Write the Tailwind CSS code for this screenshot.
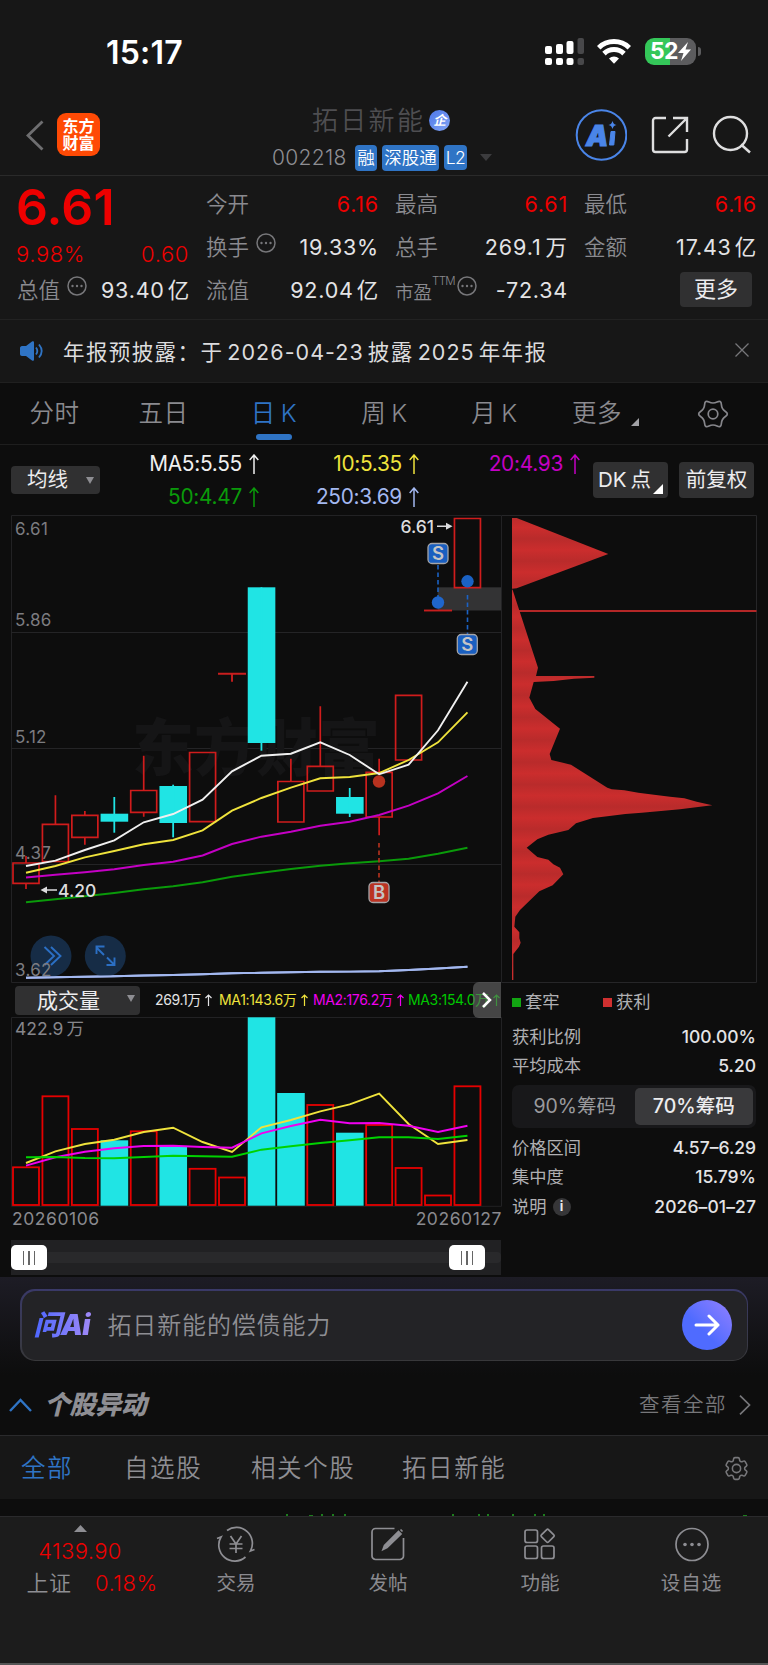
<!DOCTYPE html>
<html lang="zh-CN">
<head>
    <meta charset="UTF-8">
    <meta name="viewport" content="width=device-width, initial-scale=1.0">
    <title>拓日新能 002218</title>
    <script src="https://cdn.jsdelivr.net/npm/@tailwindcss/browser@4"></script>
    <style>
        body, svg text {
            font-family: Inter, 'Noto Sans CJK SC', sans-serif;
        }
    </style>
</head>
<body class="bg-[#0d0d0d]">
<div class="w-[768px] h-[1665px] overflow-hidden flex flex-col whitespace-nowrap text-[#8a8a8f]">

    <!-- Status bar -->
    <div class="h-[100px] shrink-0 bg-[#171717] flex items-start pl-[106px] pr-[67px] pt-[34px]">
        <div class="text-white text-[32px] leading-[38px] font-semibold tracking-[0.200px]">15:17</div>
        <div class="ml-auto flex items-center pt-[3px]">
            <svg class="w-[40px] h-[28px]" viewBox="0 0 40 28" fill="#fff">
                <rect x="0" y="9" width="7" height="8" rx="2"/><rect x="11" y="7" width="7" height="10" rx="2"/><rect x="21.500" y="4" width="7" height="13" rx="2"/>
                <rect x="32.500" y="1" width="6.500" height="16" rx="2" fill="#48484a"/>
                <rect x="0" y="21" width="7" height="7" rx="2"/><rect x="11" y="21" width="7" height="7" rx="2"/><rect x="21.500" y="21" width="7" height="7" rx="2"/>
                <rect x="32.500" y="21" width="6.500" height="7" rx="2" fill="#48484a"/>
            </svg>
            <svg class="w-[34px] h-[25px] ml-[12px]" viewBox="0 0 34 25" fill="none" stroke="#fff" stroke-width="5">
                <path d="M1.700 8.800a22 22 0 0 1 30.600 0"/><path d="M7 14.600a14.500 14.500 0 0 1 20 0"/>
                <path d="M12 19.500a7.200 7.200 0 0 1 10 0L17 24.800z" fill="#fff" stroke="none"/>
            </svg>
            <div class="ml-[14px] w-[51px] h-[27px] rounded-[9px] bg-gradient-to-r from-[#34c759] from-50% to-[#5c5c5e] to-50% flex items-center justify-center text-white font-bold text-[23px] leading-none tracking-[-0.5px]">52<svg class="w-[13px] h-[19px]" viewBox="0 0 13 19" fill="#fff"><path d="M10 0 0 11h5.500L3 19 13 7.500H7.500z"/></svg></div>
            <div class="w-[3px] h-[9px] ml-[2px] rounded-r-full bg-[#5c5c5e]"></div>
        </div>
    </div>

    <!-- Stock header -->
    <div class="h-[76px] shrink-0 bg-[#171717] border-b border-[#2a2a2a] flex items-start">
        <svg class="w-[18px] h-[31px] ml-[26px] mt-[20px]" viewBox="0 0 18 31" fill="none" stroke="#6e6e70" stroke-width="2.800"><path d="M16.500 1.500 2 15.500l14.500 14"/></svg>
        <div class="ml-[13px] mt-[13px] w-[43px] h-[43px] rounded-[9px] bg-[#ff4a05] text-white text-[16px] leading-[17px] font-bold flex items-center justify-center text-center">东方<br>财富</div>
        <div class="ml-[172px] w-[223px]">
            <div class="flex items-center pl-[40px] h-[40px]">
                <span class="text-[26px] font-[350] tracking-[2.300px] text-[#4e4e51]">拓日新能</span>
                <span class="ml-[4px] w-[21px] h-[21px] rounded-full bg-gradient-to-br from-[#4d76e8] to-[#83a5f5] text-white text-[13px] leading-none font-bold italic flex items-center justify-center">企</span>
            </div>
            <div class="flex items-center h-[35px] gap-[5px] text-white text-[17.500px] leading-none font-[350]">
                <span class="text-[21px] text-[#8e8e93] w-[78px] tracking-[0.300px]">002218</span>
                <span class="bg-[#2f74c5] rounded-[4px] h-[26px] w-[22px] flex items-center justify-center">融</span>
                <span class="bg-[#2f74c5] rounded-[4px] h-[26px] w-[57px] flex items-center justify-center">深股通</span>
                <span class="bg-[#2f74c5] rounded-[4px] h-[25px] w-[23px] flex items-center justify-center tracking-[-0.500px]">L2</span>
                <svg class="w-[12px] h-[7px] ml-[8px]" viewBox="0 0 12 7" fill="#3c3c3e"><path d="M0 0h12L6 7z"/></svg>
            </div>
        </div>
        <svg class="w-[52px] h-[52px] ml-[80px] mt-[9px]" viewBox="0 0 52 52">
            <circle cx="26.500" cy="26" r="24.800" fill="none" stroke="#4a85e8" stroke-width="2"/>
            <text x="11" y="36.500" font-size="28" font-weight="900" font-style="italic" fill="#4a85e8" stroke="#4a85e8" stroke-width="1">A</text>
            <path d="M36 22.500h4l-1.200 13.500h-4.300z" fill="#4a85e8" stroke="#4a85e8" stroke-linejoin="round"/>
            <path d="M37.500 12c.8 2.500 1.500 3.200 4 4-2.500.8-3.200 1.500-4 4-.8-2.500-1.500-3.200-4-4 2.500-.8 3.200-1.500 4-4z" fill="#4a85e8"/>
        </svg>
        <svg class="w-[38px] h-[38px] ml-[24px] mt-[16px]" viewBox="0 0 38 38" fill="none" stroke="#dededf" stroke-width="2.400">
            <path d="M15 2H4.500a2.500 2.500 0 0 0-2.500 2.500v29A2.500 2.500 0 0 0 4.500 36h29a2.500 2.500 0 0 0 2.500-2.500V23M22 2h14v14M35.500 2.500 17.500 20.500"/>
        </svg>
        <svg class="w-[40px] h-[40px] ml-[23px] mt-[15px]" viewBox="0 0 40 40" fill="none" stroke="#dededf" stroke-width="2.400"><circle cx="18.500" cy="18.500" r="16.500"/><path d="M29 29.500l9 8"/></svg>
    </div>

    <!-- Quote figures -->
    <div class="h-[144px] shrink-0 bg-[#171717] border-b border-[#222] pt-[7px] pl-[17px] pr-[12px] flex gap-[17px] text-[21.500px] leading-none">
        <div class="w-[172px]">
            <div class="h-[50px] text-[#ee0000] text-[50px] leading-[48px] font-semibold tracking-[0.200px] -ml-px">6.61</div>
            <div class="h-[36px] flex items-end justify-between text-[#ee0000] text-[22px] font-[350] leading-[28px] pb-px"><span class="tracking-[0.600px] -ml-px">9.98%</span><span class="tracking-[0.600px]">0.60</span></div>
            <div class="h-[43px] flex items-center">
                <span class="font-[350]">总值</span>
                <svg class="w-[20px] h-[20px] ml-[7px] mb-[10px]" viewBox="0 0 20 20" fill="#77777a"><circle cx="10" cy="10" r="9" fill="none" stroke="#77777a" stroke-width="1.500"/><circle cx="5.500" cy="10" r="1.200"/><circle cx="10" cy="10" r="1.200"/><circle cx="14.500" cy="10" r="1.200"/></svg>
                <span class="ml-auto text-[#e4e4e6] tracking-[0.800px] -mr-px">93.40<span class="ml-[3px]">亿</span></span>
            </div>
        </div>
        <div class="w-[172px]">
            <div class="h-[43px] flex items-center justify-between"><span class="font-[350]">今开</span><span class="text-[#ee0000] tracking-[0.800px] -mr-px">6.16</span></div>
            <div class="h-[43px] flex items-center">
                <span class="font-[350]">换手</span>
                <svg class="w-[20px] h-[20px] ml-[7px] mb-[10px]" viewBox="0 0 20 20" fill="#77777a"><circle cx="10" cy="10" r="9" fill="none" stroke="#77777a" stroke-width="1.500"/><circle cx="5.500" cy="10" r="1.200"/><circle cx="10" cy="10" r="1.200"/><circle cx="14.500" cy="10" r="1.200"/></svg>
                <span class="ml-auto text-[#e4e4e6] tracking-[0.800px] -mr-px">19.33%</span>
            </div>
            <div class="h-[43px] flex items-center justify-between"><span class="font-[350]">流值</span><span class="text-[#e4e4e6] tracking-[0.800px] -mr-px">92.04<span class="ml-[3px]">亿</span></span></div>
        </div>
        <div class="w-[172px]">
            <div class="h-[43px] flex items-center justify-between"><span class="font-[350]">最高</span><span class="text-[#ee0000] tracking-[0.800px] -mr-px">6.61</span></div>
            <div class="h-[43px] flex items-center justify-between"><span class="font-[350]">总手</span><span class="text-[#e4e4e6] tracking-[0.900px] -mr-px">269.1<span class="ml-[4px]">万</span></span></div>
            <div class="h-[43px] flex items-center">
                <span class="font-[350] text-[18.500px] mt-[4px]">市盈</span>
                <span class="font-[350] text-[11.500px] tracking-[-0.700px] mb-[18px]">TTM</span>
                <svg class="w-[20px] h-[20px] ml-[2px] mb-[10px]" viewBox="0 0 20 20" fill="#77777a"><circle cx="10" cy="10" r="9" fill="none" stroke="#77777a" stroke-width="1.500"/><circle cx="5.500" cy="10" r="1.200"/><circle cx="10" cy="10" r="1.200"/><circle cx="14.500" cy="10" r="1.200"/></svg>
                <span class="ml-auto text-[#e4e4e6] tracking-[0.800px] -mr-px">-72.34</span>
            </div>
        </div>
        <div class="w-[172px]">
            <div class="h-[43px] flex items-center justify-between"><span class="font-[350]">最低</span><span class="text-[#ee0000] tracking-[0.800px] -mr-px">6.16</span></div>
            <div class="h-[43px] flex items-center justify-between"><span class="font-[350]">金额</span><span class="text-[#e4e4e6] tracking-[0.800px] -mr-px">17.43<span class="ml-[3px]">亿</span></span></div>
            <div class="h-[43px] flex items-center justify-end pr-[4px]"><span class="w-[72px] h-[35px] mb-[3px] rounded-[4px] bg-[#303031] text-[#ececee] flex items-center justify-center text-[22px]">更多</span></div>
        </div>
    </div>

    <!-- Notice -->
    <div class="h-[63px] shrink-0 bg-[#171717] border-b border-[#202020] flex items-center pl-[20px] pr-[19px]">
        <svg class="w-[24px] h-[20px]" viewBox="0 0 24 20" fill="none" stroke="#2f74c5" stroke-width="1.800"><path d="M0 7c0-1 .8-2 2-2h4l6-4.500c1-.7 2-.3 2 1v17c0 1.300-1 1.700-2 1L6 15H2c-1.200 0-2-1-2-2z" fill="#2f74c5" stroke="none"/><path d="M16 6.500c1.500 2 1.500 5 0 7M19 3.500c3.300 4 3.300 9 0 13"/></svg>
        <div class="ml-[19px] mt-[2px] text-[21.500px] text-[#dcdcde] tracking-[1.400px]">年报预披露：于<span class="mx-[4px] tracking-[1.050px]">2026-04-23</span>披露<span class="mx-[4px] tracking-[1.050px]">2025</span>年年报</div>
        <svg class="w-[14px] h-[14px] ml-auto mb-[3px]" viewBox="0 0 14 14" stroke="#77777a" stroke-width="1.300"><path d="M.5.500l13 13M13.500.500l-13 13"/></svg>
    </div>

    <!-- Period tabs -->
    <div class="h-[62px] shrink-0 border-b border-[#1e1e1e] flex items-center text-[24.500px] font-[350] tracking-[0.600px] leading-none">
        <div class="w-[109px] text-center">分时</div>
        <div class="w-[109px] text-center">五日</div>
        <div class="w-[112px] h-full flex flex-col items-center justify-end text-[#2f74c5]">
            <div class="mb-[9px]">日<span class="ml-[5px]">K</span></div>
            <div class="w-[36px] h-[6px] rounded-full bg-[#2f74c5] mb-[4px]"></div>
        </div>
        <div class="w-[109px] text-center">周<span class="ml-[5px]">K</span></div>
        <div class="w-[111px] text-center">月<span class="ml-[5px]">K</span></div>
        <div class="w-[100px] flex items-end pl-[22px]">更多<svg class="w-[8px] h-[8px] ml-[9px]" viewBox="0 0 8 8" fill="#a2a2a6"><path d="M8 0v8H0z"/></svg></div>
        <svg class="w-[32px] h-[32px] ml-[47px]" viewBox="-16 -16 32 32" fill="none" stroke="#86868b" stroke-width="1.700">
            <path d="M12.430-2.500Q16.200 0 12.430 2.500 8.660 5 8.380 9.500 8.100 14.030 4.050 12 0 10-4.050 12-8.100 14.030-8.380 9.500-8.660 5-12.430 2.500-16.200 0-12.430-2.500-8.660-5-8.380-9.500-8.100-14.030-4.050-12 0-10 4.050-12 8.100-14.030 8.380-9.500 8.660-5 12.430-2.500z"/><circle r="4.800"/>
        </svg>
    </div>

    <!-- Moving averages -->
    <div class="h-[70px] shrink-0 flex items-center pl-[11px]">
        <div class="w-[89px] h-[28px] rounded-[4px] bg-[#303031] text-[#ececee] text-[20.500px] leading-none flex items-center pl-[16px]">均线<svg class="w-[8px] h-[7px] ml-[18px]" viewBox="0 0 8 7" fill="#8e8e93"><path d="M0 0h8L4 7z"/></svg></div>
        <div class="grid grid-cols-[159px_160px_161px] text-[20.800px] leading-[33px] tracking-[-0.250px]">
            <div class="flex items-center justify-end gap-[7px] text-[#f0f0f0]">MA5:5.55<svg class="w-[10px] h-[20px]" viewBox="0 0 10 20" fill="none" stroke="currentColor" stroke-width="1.500"><path d="M5 20V1M.7 6 5 1l4.300 5"/></svg></div>
            <div class="flex items-center justify-end gap-[7px] text-[#efe33c]">10:5.35<svg class="w-[10px] h-[20px]" viewBox="0 0 10 20" fill="none" stroke="currentColor" stroke-width="1.500"><path d="M5 20V1M.7 6 5 1l4.300 5"/></svg></div>
            <div class="flex items-center justify-end gap-[7px] text-[#c400c4]">20:4.93<svg class="w-[10px] h-[20px]" viewBox="0 0 10 20" fill="none" stroke="currentColor" stroke-width="1.500"><path d="M5 20V1M.7 6 5 1l4.300 5"/></svg></div>
            <div class="flex items-center justify-end gap-[7px] text-[#0a9a0a]">50:4.47<svg class="w-[10px] h-[20px]" viewBox="0 0 10 20" fill="none" stroke="currentColor" stroke-width="1.500"><path d="M5 20V1M.7 6 5 1l4.300 5"/></svg></div>
            <div class="flex items-center justify-end gap-[7px] text-[#a3b8f0]">250:3.69<svg class="w-[10px] h-[20px]" viewBox="0 0 10 20" fill="none" stroke="currentColor" stroke-width="1.500"><path d="M5 20V1M.7 6 5 1l4.300 5"/></svg></div>
        </div>
        <div class="ml-[13px] w-[75px] h-[36px] rounded-[4px] bg-[#303031] text-[#ececee] text-[20.500px] flex items-center pl-[5px] relative">DK<span class="ml-[4px]">点</span><svg class="absolute right-[5px] bottom-[4px] w-[10px] h-[10px]" viewBox="0 0 10 10" fill="#fff"><path d="M10 0v10H0z"/></svg></div>
        <div class="ml-[11px] w-[75px] h-[36px] rounded-[4px] bg-[#303031] text-[#ececee] text-[20.500px] flex items-center justify-center">前复权</div>
    </div>

    <!-- Charts -->
    <div class="h-[762px] shrink-0 flex">
        <div class="w-[502px] flex flex-col">
            <svg id="kline" class="w-[502px] h-[468px] shrink-0" viewBox="0 515 502 468"></svg>
            <div class="h-[34px] shrink-0 relative flex items-center pl-[15px] text-[14px] leading-none tracking-[-0.350px]">
                <div class="w-[125px] h-[29px] shrink-0 rounded-[4px] bg-[#303031] text-[#ececee] text-[21px] tracking-normal flex items-center pl-[22px]">成交量<svg class="w-[8px] h-[7px] ml-[27px] mb-[4px]" viewBox="0 0 8 7" fill="#8e8e93"><path d="M0 0h8L4 7z"/></svg></div>
                <span class="w-[64px] shrink-0 pl-[15px] text-[#e4e4e6] flex items-center gap-[4px]">269.1万<svg class="w-[7px] h-[12px] shrink-0" viewBox="0 0 7 12" fill="none" stroke="currentColor" stroke-width="1.200"><path d="M3.500 12V1M.5 4l3-3 3 3"/></svg></span>
                <span class="w-[94px] shrink-0 pl-[15px] text-[#efe33c] flex items-center gap-[4px]">MA1:143.6万<svg class="w-[7px] h-[12px] shrink-0" viewBox="0 0 7 12" fill="none" stroke="currentColor" stroke-width="1.200"><path d="M3.500 12V1M.5 4l3-3 3 3"/></svg></span>
                <span class="w-[95px] shrink-0 pl-[15px] text-[#f000f0] flex items-center gap-[4px]">MA2:176.2万<svg class="w-[7px] h-[12px] shrink-0" viewBox="0 0 7 12" fill="none" stroke="currentColor" stroke-width="1.200"><path d="M3.500 12V1M.5 4l3-3 3 3"/></svg></span>
                <span class="shrink-0 pl-[15px] text-[#00c800] flex items-center gap-[4px]">MA3:154.0万<svg class="w-[7px] h-[12px] shrink-0" viewBox="0 0 7 12" fill="none" stroke="currentColor" stroke-width="1.200"><path d="M3.500 12V1M.5 4l3-3 3 3"/></svg></span>
                <div class="absolute right-[1px] top-[-1px] w-[28px] h-[36px] rounded-l-[6px] bg-[#6a6a6a]/60 flex items-center justify-center"><svg class="w-[10px] h-[16px]" viewBox="0 0 10 16" fill="none" stroke="#fff" stroke-width="2.500"><path d="M1 1l7 7-7 7"/></svg></div>
            </div>
            <svg id="volume" class="w-[502px] h-[190px] shrink-0" viewBox="0 1017 502 190"></svg>
            <div class="h-[33px] shrink-0 flex justify-between pl-[12px] text-[17.500px] leading-[23px] tracking-[0.550px]"><span>20260106</span><span>20260127</span></div>
            <div class="ml-[11px] mr-px h-[35px] shrink-0 bg-[#212123] flex items-center">
                <div class="h-[11px] w-full rounded-r-[4px] bg-[#29292b] flex items-center justify-between pr-[16px]">
                    <div class="w-[36px] h-[25px] rounded-[5px] bg-white flex items-center justify-center gap-[4px]"><i class="w-[1.500px] h-[14px] bg-[#666]"></i><i class="w-[1.500px] h-[14px] bg-[#666]"></i><i class="w-[1.500px] h-[14px] bg-[#666]"></i></div>
                    <div class="w-[36px] h-[25px] rounded-[5px] bg-white flex items-center justify-center gap-[4px]"><i class="w-[1.500px] h-[14px] bg-[#666]"></i><i class="w-[1.500px] h-[14px] bg-[#666]"></i><i class="w-[1.500px] h-[14px] bg-[#666]"></i></div>
                </div>
            </div>
        </div>

        <!-- Chip distribution -->
        <div class="w-[266px] flex flex-col text-[17.300px] leading-none text-[#b0b0b3]">
            <svg class="w-[266px] h-[468px] shrink-0" viewBox="502 515 266 468">
                <defs>
                    <linearGradient id="chips" gradientUnits="userSpaceOnUse" x1="0" y1="150" x2="0" y2="217" spreadMethod="repeat">
                        <stop offset="0" stop-color="#cb2d2d"/><stop offset=".5" stop-color="#b92b2b"/><stop offset="1" stop-color="#cb2d2d"/>
                    </linearGradient>
                </defs>
                <path d="M502 515.500H756.500V982.500H502" fill="none" stroke="#262628"/>
                <path d="M519 611H756.500" stroke="#b32727" stroke-width="2"/>
                <!-- profile outline, three units to a pixel -->
                <g transform="translate(500 500) scale(.33333)" fill="url(#chips)">
                    <polygon points="36,54 50,54 325,162 50,265 36,266"/>
                    <polygon points="36,268 38,270 114,503 108,528 283,528 283,533 222,536 161,543 101,546 88,593 106,627 180,686 149,762 154,780 213,794 322,863 335,868 373,871 415,878 462,884 510,890 553,895 590,905 637,916 588,922 540,928 483,933 425,938 376,942 328,948 279,954 228,970 205,990 145,1004 112,1018 80,1043 112,1071 145,1079 160,1093 180,1103 190,1123 158,1156 118,1174 60,1230 46,1250 43,1280 58,1297 58,1315 62,1328 57,1340 40,1362 40,1440 36,1440"/>
                </g>
            </svg>
            <div class="pl-[10px] pr-[12px]">
                <div class="h-[38px] flex items-center"><i class="w-[9px] h-[9px] bg-[#12a512]"></i><span class="ml-[4px] w-[78px]">套牢</span><i class="w-[9px] h-[9px] bg-[#cf3030]"></i><span class="ml-[4px]">获利</span></div>
                <div class="h-[29px] flex items-center justify-between mt-px"><span>获利比例</span><span class="text-[#e4e4e6] font-medium text-[17.500px]">100.00%</span></div>
                <div class="h-[29px] flex items-center justify-between"><span>平均成本</span><span class="text-[#e4e4e6] font-medium text-[17.500px]">5.20</span></div>
                <div class="mt-[5px] h-[43px] rounded-[7px] bg-[#18181a] p-[3px] flex text-[19.500px]">
                    <span class="w-[120px] flex items-center justify-center text-[#9a9a9d]">90%筹码</span>
                    <span class="w-[119px] rounded-[5px] bg-[#39393b] flex items-center justify-center text-[#ededef] font-medium">70%筹码</span>
                </div>
                <div class="h-[29px] mt-[5px] flex items-center justify-between"><span>价格区间</span><span class="text-[#e4e4e6] font-medium text-[17.500px]">4.57–6.29</span></div>
                <div class="h-[29px] flex items-center justify-between"><span>集中度</span><span class="text-[#e4e4e6] font-medium text-[17.500px]">15.79%</span></div>
                <div class="h-[31px] flex items-center"><span>说明</span><span class="ml-[6px] w-[18px] h-[18px] rounded-full bg-[#363638] text-[#e8e8ea] text-[13px] font-bold flex items-center justify-center">i</span><span class="ml-auto text-[#e4e4e6] font-medium text-[17.500px] tracking-[0.100px]">2026–01–27</span></div>
            </div>
        </div>
    </div>

    <!-- Ask AI -->
    <div class="h-[98px] shrink-0 bg-gradient-to-b from-[#1d1c25] to-[#0d0d0d] pt-[12px] px-[20px]">
        <div class="h-[72px] rounded-[15px] p-[1.500px] bg-gradient-to-b from-[#3a3968] to-[#38383a]">
            <div class="h-full rounded-[14px] bg-[#232326] flex items-center pl-[12px] pr-[15px]">
                <span class="w-[64px] text-[28px] leading-[38px] font-black italic tracking-[-0.700px] bg-gradient-to-r from-[#4d66ff] to-[#a98cf5] bg-clip-text text-transparent">问Ai</span>
                <span class="ml-[10px] mt-[2px] text-[24px] font-[350] tracking-[0.850px] text-[#8e8e93]">拓日新能的偿债能力</span>
                <span class="ml-auto w-[50px] h-[50px] rounded-full bg-gradient-to-tr from-[#4f6bff] from-40% to-[#9280ff] flex items-center justify-center"><svg class="w-[26px] h-[22px]" viewBox="0 0 26 22" fill="none" stroke="#fff" stroke-width="3" stroke-linecap="round" stroke-linejoin="round"><path d="M2 11h22M15 2l9 9-9 9"/></svg></span>
            </div>
        </div>
    </div>

    <!-- Stock movements -->
    <div class="h-[61px] shrink-0 border-b border-[#2a2a2c] flex items-center pl-[9px] pr-[17px]">
        <svg class="w-[23px] h-[14px]" viewBox="0 0 23 14" fill="none" stroke="#2f74c5" stroke-width="2.400"><path d="M1 13 11.500 2 22 13"/></svg>
        <span class="ml-[12px] text-[26px] leading-none font-black italic tracking-[-0.400px] text-[#8e8e93]">个股异动</span>
        <span class="ml-auto mt-px text-[20.500px] font-[350] tracking-[1.500px] text-[#77777a]">查看全部</span>
        <svg class="w-[12px] h-[20px] ml-[12px]" viewBox="0 0 12 20" fill="none" stroke="#77777a" stroke-width="1.700"><path d="M1 .700l9.500 9.300L1 19.300"/></svg>
    </div>
    <div class="h-[63px] shrink-0 bg-[#171717] flex items-center pl-[21px] pr-[17px] pt-px text-[24.500px] font-[350] tracking-[1.600px] text-[#8e8e93]">
        <span class="w-[103px] text-[#2f74c5]">全部</span>
        <span class="w-[127px]">自选股</span>
        <span class="w-[151px]">相关个股</span>
        <span>拓日新能</span>
        <svg class="w-[29px] h-[29px] ml-auto" viewBox="0 0 24 24" fill="none" stroke="#77777a" stroke-width="1.300"><path d="M9.594 3.940c.09-.542.56-.94 1.110-.94h2.593c.55 0 1.020.398 1.110.94l.213 1.281c.063.374.313.686.645.87.074.04.147.083.22.127.325.196.72.257 1.075.124l1.217-.456a1.125 1.125 0 0 1 1.370.49l1.296 2.247a1.125 1.125 0 0 1-.26 1.431l-1.003.827c-.293.241-.438.613-.43.992a7.723 7.723 0 0 1 0 .255c-.008.378.137.75.43.991l1.004.827c.424.35.534.955.26 1.430l-1.298 2.247a1.125 1.125 0 0 1-1.369.491l-1.217-.456c-.355-.133-.75-.072-1.076.124a6.470 6.470 0 0 1-.22.128c-.331.183-.581.495-.644.869l-.213 1.281c-.09.543-.56.94-1.110.94h-2.594c-.55 0-1.019-.398-1.110-.94l-.213-1.281c-.062-.374-.312-.686-.644-.87a6.520 6.520 0 0 1-.22-.127c-.325-.196-.72-.257-1.076-.124l-1.217.456a1.125 1.125 0 0 1-1.369-.49l-1.297-2.247a1.125 1.125 0 0 1 .26-1.431l1.004-.827c.292-.24.437-.613.43-.991a6.932 6.932 0 0 1 0-.255c.007-.38-.138-.751-.43-.992l-1.004-.827a1.125 1.125 0 0 1-.26-1.430l1.297-2.247a1.125 1.125 0 0 1 1.370-.491l1.216.456c.356.133.751.072 1.076-.124.072-.044.146-.086.22-.128.332-.183.582-.495.644-.869l.214-1.280Z"/><circle cx="12" cy="12" r="3.400"/></svg>
    </div>
    <svg class="w-[768px] h-[17px] shrink-0" viewBox="0 0 768 17" fill="#1d7d1d">
        <path d="M286 15h2v2h-2zM309 16h4v1h-4zM321 15h2v2h-2zM332 15h2v2h-2zM344 15h2v2h-2zM452 15h2v2h-2zM478 15h2v2h-2zM487 15h2v2h-2zM512 15h2v2h-2zM534 15h2v2h-2zM543 15h2v2h-2zM743 16h4v1h-4z"/>
    </svg>

    <!-- Bottom navigation -->
    <div class="h-[149px] shrink-0 bg-[#1c1c1c] border-t border-[#2a2a2c] border-b-2 border-b-[#555] flex text-[19.500px] leading-none">
        <div class="w-[160px] flex flex-col items-center text-[22px] text-[#ee0000] font-[350]">
            <svg class="w-[13px] h-[7px] mt-[8px]" viewBox="0 0 13 7" fill="#8e8e93"><path d="M0 7h13L6.500 0z"/></svg>
            <div class="mt-[8px] tracking-[0.350px]">4139.90</div>
            <div class="mt-[10px] ml-[24px] w-[131px] flex justify-between tracking-[0.500px]"><span class="text-[#8e8e93]">上证</span><span>0.18%</span></div>
        </div>
        <div class="w-[152px] flex flex-col items-center">
            <svg class="w-[40px] h-[36px] mt-[9px]" viewBox="0 0 40 36" fill="none" stroke="#8e8e93" stroke-width="1.700">
                <path d="M11 4.500a16 16 0 0 1 23.500 20.500l4-1.500M29.500 31A16 16 0 0 1 5 11l-4 1.500"/>
                <path d="M14.500 10l5.500 8 5.500-8M20 18v9M13.500 18h13M13.500 22.500h13"/>
            </svg>
            <div class="mt-[12px]">交易</div>
        </div>
        <div class="w-[152px] flex flex-col items-center">
            <svg class="w-[36px] h-[36px] mt-[9px]" viewBox="0 0 36 36" fill="none" stroke="#8e8e93" stroke-width="1.700">
                <path d="M24.500 2.500H5.500a3.500 3.500 0 0 0-3.500 3.500v24a3.500 3.500 0 0 0 3.500 3.500h24.500a3.500 3.500 0 0 0 3.500-3.500V12"/>
                <path d="M13 23.500l1.500-4L28.500 5.500l2.500 2.500L17 21.500zM30.500 3.500l2 2" fill="#8e8e93"/>
            </svg>
            <div class="mt-[12px]">发帖</div>
        </div>
        <div class="w-[152px] flex flex-col items-center">
            <svg class="w-[34px] h-[36px] mt-[9px]" viewBox="0 0 34 36" fill="none" stroke="#8e8e93" stroke-width="1.700">
                <rect x="2" y="4" width="12.500" height="12.500" rx="2"/><rect x="2" y="20" width="12.500" height="12.500" rx="2"/><rect x="18.500" y="20" width="12.500" height="12.500" rx="2"/>
                <rect x="19.600" y="4.800" width="10" height="10" rx="1.200" transform="rotate(45 24.600 9.800)"/>
            </svg>
            <div class="mt-[12px]">功能</div>
        </div>
        <div class="w-[151px] flex flex-col items-center">
            <svg class="w-[36px] h-[36px] mt-[9px]" viewBox="0 0 36 36" fill="#8e8e93"><circle cx="18" cy="18.500" r="16" fill="none" stroke="#8e8e93" stroke-width="1.700"/><circle cx="11" cy="18.500" r="1.800"/><circle cx="18" cy="18.500" r="1.800"/><circle cx="25" cy="18.500" r="1.800"/></svg>
            <div class="mt-[12px] tracking-[1px]">设自选</div>
        </div>
    </div>
</div>

<script>
    const STEP = 29.43, FIRST = 26;
    const x = i => FIRST + i * STEP;

    // up?, body top, body bottom, wick top, wick bottom
    const candles = [
        [1, 863, 883.3, 856, 889], [1, 824.3, 861.5, 795.3, 861.5], [1, 815.3, 837.3, 811, 844.7], [0, 813.7, 821.7, 797, 832.7],
        [1, 790.5, 812.3, 755.7, 816.7], [0, 786, 823, 784.7, 837.3], [1, 752.5, 821.7, 752.5, 821.7], [1, 673.7, 673.7, 673.7, 681.7],
        [0, 587.3, 743, 587.3, 750.7], [1, 781.5, 822, 758.7, 822], [1, 766.3, 791, 706.3, 791], [0, 797, 813.7, 788, 817],
        [1, 772.3, 817, 758.7, 835.3], [1, 695.3, 760, 695.3, 760], [1, 610.5, 610.5, 610.5, 610.5], [1, 518.5, 587.7, 518.5, 587.7]
    ];
    const averages = {
        '#a3b8f0': [977.7, 977.2, 976.7, 976.2, 975.5, 975, 974.2, 973.3, 972.8, 972.3, 971.8, 971.6, 971.2, 970, 968.5, 966.7],
        '#0a9a0a': [902.3, 899.3, 896.3, 893, 889.3, 886.3, 882.3, 876.7, 872.7, 869, 865.7, 863.3, 861.3, 858.7, 853.7, 847.7],
        '#c400c4': [877.5, 874.7, 872.3, 869.3, 865, 861.7, 855.5, 844, 836.7, 831.7, 825.7, 821.7, 815, 805.7, 793.3, 776],
        '#efe33c': [872.7, 866, 857.3, 851, 844.3, 840, 830.3, 810.7, 798, 787.7, 778.3, 777, 773, 760, 742.3, 712.3],
        '#f0f0f0': [866, 860.7, 850, 840.3, 822.3, 814, 799.7, 771.3, 755.7, 753.7, 742.3, 755, 774.3, 764.7, 730.3, 681.7]
    };
    const volumes = [1167.3, 1096.3, 1129, 1140.3, 1131.3, 1146.7, 1168.8, 1177.5, 1017.3, 1093, 1105, 1132.7, 1125, 1168, 1195.5, 1086.3];
    const volumeUp = [1, 1, 1, 0, 1, 0, 1, 1, 0, 0, 1, 0, 1, 1, 1, 1];
    const volumeAverages = {
        '#efe33c': [1163, 1151.3, 1144, 1139.7, 1132, 1127.7, 1142, 1152, 1127.3, 1120, 1111.3, 1104.3, 1093.7, 1124, 1144, 1140],
        '#f000f0': [1165.7, 1157.3, 1151.7, 1148.3, 1146, 1145.7, 1147, 1147.7, 1133.3, 1126, 1119.7, 1123.3, 1123, 1125.7, 1132, 1125.7],
        '#00d200': [1157.3, 1157, 1158, 1158.3, 1157, 1155.7, 1156.3, 1156.7, 1149.7, 1146.3, 1143, 1140.3, 1137.3, 1137.3, 1139, 1135.7]
    };

    const hline = (y, c) => `<path d="M11 ${y}H501" stroke="${c}"/>`;
    const curve = (ys, c) => `<polyline fill="none" stroke="${c}" stroke-width="1.9" points="${ys.map((y, i) => x(i) + ',' + y).join(' ')}"/>`;
    const curves = set => Object.entries(set).map(([c, ys]) => curve(ys, c)).join('');
    const label = (y, t) => `<text x="15" y="${y}" font-size="17" fill="#7c7c80" letter-spacing=".3">${t}</text>`;

    function candle([up, top, bottom, high, low], i) {
        const cx = x(i);
        if (!up) {
            return `<rect x="${cx - 13.7}" y="${top}" width="27.6" height="${bottom - top}" fill="#20e4e4"/><path d="M${cx} ${high}V${low}" stroke="#20e4e4" stroke-width="1.8"/>`;
        }
        if (top === bottom) {
            return `<path d="M${cx - 14} ${top}h28M${cx} ${top}V${low}" stroke="#c81e1e" stroke-width="1.9"/>`;
        }
        return `<path fill="none" stroke="#d01c1c" stroke-width="1.7" d="M${cx - 13} ${top}h26V${bottom}h-26zM${cx} ${high}V${top}M${cx} ${bottom}V${low}"/>`;
    }

    function marker(cx, cy, t, c) {
        return `<rect x="${cx - 10}" y="${cy - 10}" width="20" height="20" rx="4" fill="${c}" stroke="#a5a5a8" stroke-width="1.3"/>
            <text x="${cx}" y="${cy + 6.6}" font-size="18.5" font-weight="600" text-anchor="middle" fill="#c4c4c6">${t}</text>`;
    }

    document.getElementById('kline').innerHTML = `
        <path d="M11.500 982.500V515.500H501.500V982.500z" fill="none" stroke="#222224"/>
        ${[632.5, 748.5, 864.5].map(y => hline(y, '#242426')).join('')}
        <text x="132" y="771" font-size="62" font-weight="900" fill="#151516">东方财富</text>
        <rect x="437.7" y="587.3" width="63.3" height="23.2" fill="#333334"/>
        ${label(534.7, '6.61')}${label(626.3, '5.86')}${label(743.3, '5.12')}${label(859, '4.37')}
        ${candles.map(candle).join('')}
        ${curves(averages)}
        <g fill="#dcdcde" font-size="17.500" font-weight="500"><text x="400.500" y="532.500">6.61</text><text x="58" y="896.500">4.20</text></g>
        <path d="M437 526.200H447M45 890H57" stroke="#dcdcde" stroke-width="1.500"/>
        <path d="M446 522.700l6.500 3.500-6.500 3.500zM47 886.500l-6.500 3.500 6.500 3.500z" fill="#dcdcde"/>
        <path d="M438 565V597M467.500 595V634" stroke="#1b62c4" stroke-width="1.600" stroke-dasharray="4.500 3"/>
        <path d="M379 843V882" stroke="#b8321f" stroke-width="1.600" stroke-dasharray="4.500 3"/>
        <circle cx="438" cy="602.500" r="6.200" fill="#1f66cc"/><circle cx="467.500" cy="581.300" r="6.200" fill="#1b62c4"/>
        <circle cx="379" cy="781.500" r="6.200" fill="#b8321f"/>
        ${marker(438, 553.5, 'S', '#1a5fc0')}${marker(467.3, 644.5, 'S', '#1a5fc0')}${marker(379, 892.5, 'B', '#bb3323')}
        <circle cx="51" cy="956" r="20.500" fill="#162c46"/><circle cx="105.300" cy="956" r="20.500" fill="#162c46"/>
        <g fill="none" stroke="#2b6fc4" stroke-width="1.900">
            <path d="M44.500 947l9.500 9-9.500 9M51 947l9.500 9-9.500 9"/>
            <path d="M104 955l-7.500-7.500M96.500 954v-7.500h8M107 957.500l7.500 7.500M114.500 957.500v7.500h-8"/>
        </g>
        ${label(975.7, '3.62')}
        ${curve(averages['#a3b8f0'], '#a3b8f0')}`;

    document.getElementById('volume').innerHTML = `
        <path d="M11.500 1206.300V1017.500H501.500V1206.300z" fill="none" stroke="#222224"/>
        <text x="15" y="1035" font-size="17.500" fill="#86868b">422.9<tspan dx="3">万</tspan></text>
        ${volumes.map((top, i) => volumeUp[i]
            ? `<rect x="${x(i) - 13}" y="${top}" width="26" height="${1205 - top}" fill="none" stroke="#e60000" stroke-width="1.8"/>`
            : `<rect x="${x(i) - 13.7}" y="${top}" width="27.6" height="${1205.7 - top}" fill="#20e4e4"/>`).join('')}
        ${curves(volumeAverages)}`;
</script>
</body>
</html>
